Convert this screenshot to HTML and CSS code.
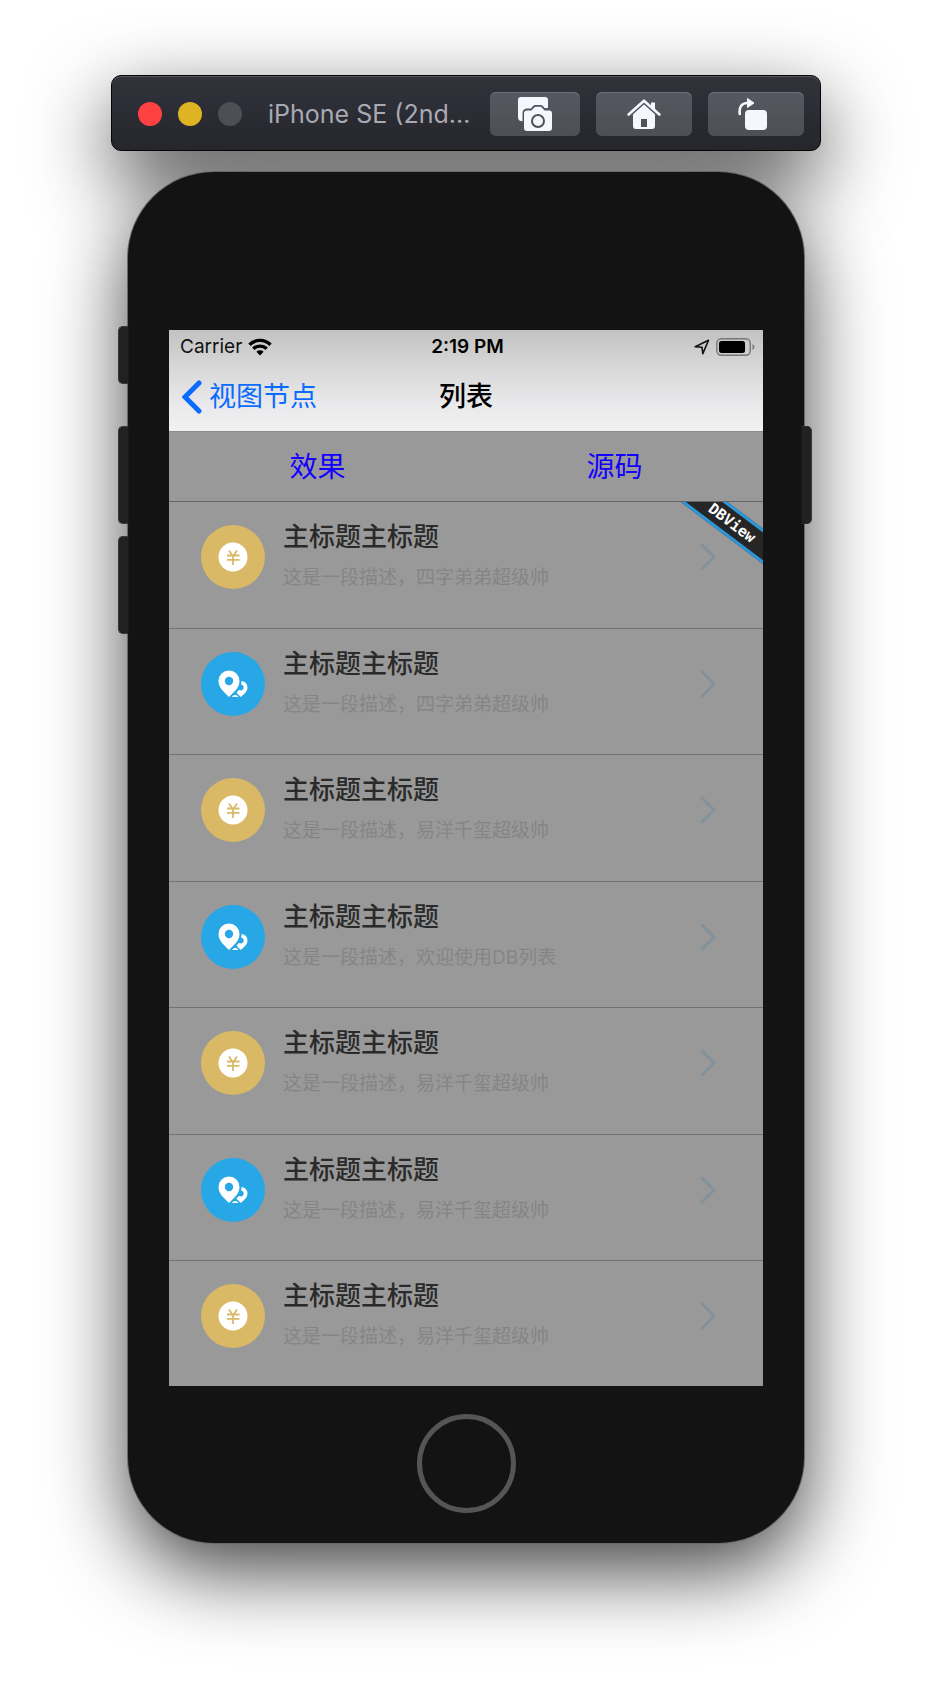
FILE: index.html
```html
<!DOCTYPE html>
<html lang="zh-CN">
<head>
<meta charset="utf-8">
<meta name="viewport" content="width=device-width, initial-scale=1">
<title>列表</title>
<link rel="stylesheet" href="styles.css">
</head>
<body>
<svg class="sprite" aria-hidden="true">
  <symbol id="coin" viewBox="0 0 64 64">
    <circle cx="32" cy="32" r="32" fill="#d9b966"/>
    <circle cx="32" cy="32" r="14.5" fill="#fff"/>
    <path d="M28 25.500l4 6 4-6M26 30.500h12.500M26 34.800h12.500M32 31v9" fill="none" stroke="#d9b966" stroke-width="1.800"/>
  </symbol>
  <symbol id="place" viewBox="0 0 64 64">
    <circle cx="32" cy="32" r="32" fill="#28a7e6"/>
    <path fill="#fff" fill-rule="evenodd" d="M28 18.500a10.500 10.500 0 0 1 10.500 10.500c0 6.500-5 10.500-10.500 16-5.500-5.500-10.500-9.500-10.500-16A10.500 10.500 0 0 1 28 18.500zM28 24.800a4.200 4.200 0 1 0 0 8.400 4.200 4.200 0 0 0 0-8.400z"/>
    <path fill="#fff" d="M40.500 29c3.500.3 6 3 6 6.500 0 3.700-3 6.200-6.700 9.500l-4.300-4.300 2.200-2.700c2.500 1.200 5-.1 5-2.500 0-1.600-1-2.700-2.700-2.900.5-1.200.6-2.400.5-3.600zM31 45c1-1.400 2-1.900 3.200-1.900S36.500 43.600 37.500 45z"/>
  </symbol>
  <symbol id="chevron" viewBox="0 0 18 30">
    <path d="M3 3l12 12L3 27" fill="none" stroke="#82929c" stroke-width="3" stroke-linecap="round" stroke-linejoin="round"/>
  </symbol>
</svg>

<main class="stage">
  <header class="toolbar">
    <div class="lights">
      <button class="light light-close" type="button" aria-label="Close"></button>
      <button class="light light-min" type="button" aria-label="Minimize"></button>
      <button class="light light-zoom" type="button" aria-label="Zoom"></button>
    </div>
    <h1 class="device-name">iPhone SE (2nd…</h1>
    <div class="tools">
      <button class="tool tool-narrow" type="button" aria-label="Screenshot">
        <svg width="34" height="34" viewBox="0 0 34 34">
          <path fill="#f5f7ff" d="M3 0h24a3 3 0 0 1 3 3v8h-3.500l-2-2.500Q23.500 8 22 8h-4.500q-1.500 0-2.500 1L13 11.500H9.500Q4.500 11.500 4.500 16v8.300Q0 24.300 0 20V3a3 3 0 0 1 3-3z"/>
          <path fill="#f5f7ff" fill-rule="evenodd" d="M9 13.500h4.500l2.500-2.800q.8-.9 2-.9h4q1.200 0 2 .9l2.500 2.800H31a3 3 0 0 1 3 3V31a3 3 0 0 1-3 3H9a3 3 0 0 1-3-3V16.500a3 3 0 0 1 3-3zM20 17a7 7 0 1 0 0 14 7 7 0 0 0 0-14zM20 19a5 5 0 1 1 0 10 5 5 0 0 1 0-10z"/>
        </svg>
      </button>
      <button class="tool" type="button" aria-label="Home">
        <svg width="34" height="30" viewBox="0 0 34 30">
          <path fill="none" stroke="#f5f7ff" stroke-width="2.600" stroke-linecap="round" stroke-linejoin="round" d="M1.600 15.500L17 1.700l15.400 13.800"/>
          <path fill="#f5f7ff" d="M24 3.500h4v8l-4-3.600z"/>
          <path fill="#f5f7ff" fill-rule="evenodd" d="M17 5.500l11 9.800V27a3 3 0 0 1-3 3H9a3 3 0 0 1-3-3V15.300zM14 20v8h6v-8z"/>
        </svg>
      </button>
      <button class="tool" type="button" aria-label="Rotate">
        <svg width="36" height="32" viewBox="0 0 36 32">
          <rect x="7" y="12" width="22" height="20" rx="4" fill="#f5f7ff"/>
          <path d="M1.800 16C.8 9.500 3.500 5 9.500 5" fill="none" stroke="#f5f7ff" stroke-width="2.600" stroke-linecap="round"/>
          <path d="M9.500.5l6.500 4.500-6.500 4.500z" fill="#f5f7ff" stroke="#f5f7ff" stroke-linejoin="round"/>
        </svg>
      </button>
    </div>
  </header>

  <section class="phone">
    <span class="side side-mute"></span>
    <span class="side side-up"></span>
    <span class="side side-down"></span>
    <span class="side side-power"></span>

    <div class="screen">
      <div class="top">
        <div class="status">
          <span class="carrier">Carrier
            <svg width="24" height="18" viewBox="0 0 24 18">
              <g fill="none" stroke="#000" stroke-width="3.400">
                <path d="M1.500 6.700a15 15 0 0 1 21 0"/>
                <path d="M5.300 10.800a9.700 9.700 0 0 1 13.400 0"/>
              </g>
              <path d="M12 17.500l-3.600-3.700a5.100 5.100 0 0 1 7.200 0z"/>
            </svg>
          </span>
          <time class="clock">2:19 PM</time>
          <span class="indicators">
            <svg width="16" height="16" viewBox="0 0 16 16"><path d="M1.200 7.700L14.500 1.300 8.800 14.700 8 8.200z" fill="none" stroke="#111" stroke-width="1.600" stroke-linejoin="round"/></svg>
            <svg width="39" height="18" viewBox="0 0 39 18">
              <rect x=".8" y=".8" width="33.500" height="16.400" rx="4.500" fill="none" stroke="#777" stroke-width="1.400"/>
              <rect x="3" y="3" width="26" height="12" rx="2.500"/>
              <path d="M36.500 6q2 .8 2 3t-2 3z" fill="#777"/>
            </svg>
          </span>
        </div>
        <nav class="nav">
          <button class="back" type="button">
            <svg width="20" height="34" viewBox="0 0 20 34"><path d="M17 3L3 17l14 14" fill="none" stroke="#0a6cff" stroke-width="5" stroke-linecap="round" stroke-linejoin="miter"/></svg>
            视图节点
          </button>
          <h2 class="nav-title">列表</h2>
        </nav>
      </div>

      <div class="tabs">
        <button class="tab" type="button">效果</button>
        <button class="tab" type="button">源码</button>
      </div>

      <div class="list-area">
        <ul class="list">
          <li class="row"><svg class="badge"><use href="#coin"/></svg><div class="copy"><h3 class="title">主标题主标题</h3><p class="desc">这是一段描述，四字弟弟超级帅</p></div><svg class="go"><use href="#chevron"/></svg></li>
          <li class="row"><svg class="badge"><use href="#place"/></svg><div class="copy"><h3 class="title">主标题主标题</h3><p class="desc">这是一段描述，四字弟弟超级帅</p></div><svg class="go"><use href="#chevron"/></svg></li>
          <li class="row"><svg class="badge"><use href="#coin"/></svg><div class="copy"><h3 class="title">主标题主标题</h3><p class="desc">这是一段描述，易洋千玺超级帅</p></div><svg class="go"><use href="#chevron"/></svg></li>
          <li class="row"><svg class="badge"><use href="#place"/></svg><div class="copy"><h3 class="title">主标题主标题</h3><p class="desc">这是一段描述，欢迎使用DB列表</p></div><svg class="go"><use href="#chevron"/></svg></li>
          <li class="row"><svg class="badge"><use href="#coin"/></svg><div class="copy"><h3 class="title">主标题主标题</h3><p class="desc">这是一段描述，易洋千玺超级帅</p></div><svg class="go"><use href="#chevron"/></svg></li>
          <li class="row"><svg class="badge"><use href="#place"/></svg><div class="copy"><h3 class="title">主标题主标题</h3><p class="desc">这是一段描述，易洋千玺超级帅</p></div><svg class="go"><use href="#chevron"/></svg></li>
          <li class="row"><svg class="badge"><use href="#coin"/></svg><div class="copy"><h3 class="title">主标题主标题</h3><p class="desc">这是一段描述，易洋千玺超级帅</p></div><svg class="go"><use href="#chevron"/></svg></li>
        </ul>
        <span class="ribbon">DBView</span>
      </div>
    </div>

    <button class="home" type="button" aria-label="Home button"></button>
  </section>
</main>
</body>
</html>
```
FILE: styles.css
```css
* {
  box-sizing: border-box;
}

body {
  margin: 0;
  background: #fff;
  font-family: Inter, "Noto Sans CJK SC", sans-serif;
}

h1, h2, h3, p, ul {
  margin: 0;
  padding: 0;
  font-weight: 400;
}

button {
  padding: 0;
  border: 0;
  background: none;
  color: inherit;
  font: inherit;
}

svg {
  display: block;
  flex: none;
}

.sprite {
  position: absolute;
  width: 0;
  height: 0;
}

.stage {
  display: flex;
  flex-direction: column;
  align-items: center;
  gap: 21px;
  padding: 75px 16px 151px;
  overflow: hidden;
  isolation: isolate;
}

/* Both shadows sit behind the bar and the device */
.toolbar::before,
.phone::before {
  content: "";
  position: absolute;
  inset: 0;
  z-index: -1;
  border-radius: inherit;
  box-shadow: 0 28px 80px rgba(0, 0, 0, .74);
}

/* Simulator window bar */
.toolbar {
  position: relative;
  display: flex;
  align-items: center;
  width: 100%;
  max-width: 710px;
  padding: 16px 16px 14px 26px;
  border: 1px solid #050506;
  border-radius: 10px;
  background: linear-gradient(#313338, #2d2e37 35%, #26272b);
  box-shadow: inset 0 1px 0 #55575b;
}

.lights {
  display: flex;
  gap: 16px;
}

.light {
  width: 24px;
  height: 24px;
  border-radius: 50%;
}

.light-close { background: #ff4141; }
.light-min { background: #dfb422; }
.light-zoom { background: #4e4f55; }

.device-name {
  flex: 1;
  min-width: 0;
  margin-left: 26px;
  overflow: hidden;
  color: #a9a9b4;
  font-size: 25px;
  line-height: 32px;
  white-space: nowrap;
}

.tools {
  display: flex;
  gap: 16px;
}

.tool {
  display: flex;
  align-items: center;
  justify-content: center;
  width: 96px;
  height: 44px;
  border-radius: 6px;
  background: linear-gradient(#565861, #4e4f55);
  box-shadow: inset 0 1px 0 #6c6e76;
}

.tool-narrow {
  width: 90px;
}

/* Device body */
.phone {
  position: relative;
  display: flex;
  flex-direction: column;
  align-items: center;
  width: 100%;
  max-width: 676px;
  padding: 158px 41px 30px;
  border-radius: 86px;
  background: #131313;
  box-shadow: 0 0 0 1px #6a6a6a;
}

.side {
  position: absolute;
  left: -10px;
  width: 11px;
  height: 98px;
  border: 1px solid #3a3a3a;
  border-right-color: #181818;
  border-radius: 5px 0 0 5px;
  background: #212121;
}

.side-mute { top: 154px; height: 58px; }
.side-up { top: 254px; }
.side-down { top: 364px; }

.side-power {
  top: 254px;
  right: -8px;
  left: auto;
  border-color: #2a2a2a #3a3a3a #2a2a2a #181818;
  border-radius: 0 5px 5px 0;
}

.home {
  width: 99px;
  height: 99px;
  margin-top: 28px;
  border: 5px solid #555;
  border-radius: 50%;
}

/* Screen */
.screen {
  width: 100%;
  overflow: hidden;
  background: #999;
}

.top {
  border-bottom: 1px solid #8c8c8c;
  background: linear-gradient(#c2c2c2, #dad9da 40%, #eae9eb 75%, #f1f1f1);
}

.status {
  display: grid;
  grid-template-columns: 1fr auto 1fr;
  align-items: center;
  height: 33px;
  padding: 0 8px 0 11px;
  color: #111;
  font-size: 19px;
  line-height: 24px;
}

.carrier,
.indicators {
  display: flex;
  align-items: center;
  gap: 6px;
}

.indicators {
  justify-content: flex-end;
}

.clock {
  color: #000;
  font-weight: 600;
}

.nav {
  display: grid;
  grid-template-columns: 1fr auto 1fr;
  align-items: center;
  height: 68px;
  padding: 0 13px;
}

.back {
  display: flex;
  align-items: center;
  gap: 7px;
  color: #0a6cff;
  font-size: 27px;
  line-height: 36px;
}

.nav-title {
  color: #000;
  font-size: 27px;
  font-weight: 500;
  line-height: 36px;
}

.tabs {
  display: grid;
  grid-template-columns: 1fr 1fr;
  border-bottom: 1px solid #666;
}

.tab {
  height: 69px;
  padding-bottom: 4px;
  color: #1400ff;
  font-size: 28px;
}

.list-area {
  position: relative;
  overflow: hidden;
}

.list {
  list-style: none;
}

.row {
  display: flex;
  align-items: flex-start;
  height: 127px;
  padding: 23px 46px 0 32px;
  border-bottom: 1px solid #727272;
}

.row:nth-child(even) {
  height: 126px;
}

.row:last-child {
  height: 125px;
  border-bottom: 0;
}

.badge {
  width: 64px;
  height: 64px;
}

.copy {
  flex: 1;
  min-width: 0;
  margin-left: 18px;
}

.title {
  margin-top: -6px;
  color: #2a2a2a;
  font-size: 26px;
  font-weight: 500;
  line-height: 36px;
}

.desc {
  margin-top: 8px;
  color: #858585;
  font-size: 19px;
  line-height: 30px;
}

.go {
  width: 18px;
  height: 30px;
  margin-top: 17px;
}

.ribbon {
  position: absolute;
  top: 7px;
  right: -39px;
  width: 140px;
  border: solid #2b97dc;
  border-width: 3px 0;
  background: #262626;
  color: #fff;
  font-family: "DejaVu Sans Mono", monospace;
  font-size: 15px;
  font-weight: 700;
  line-height: 22px;
  text-align: center;
  transform: rotate(37deg);
}
```
